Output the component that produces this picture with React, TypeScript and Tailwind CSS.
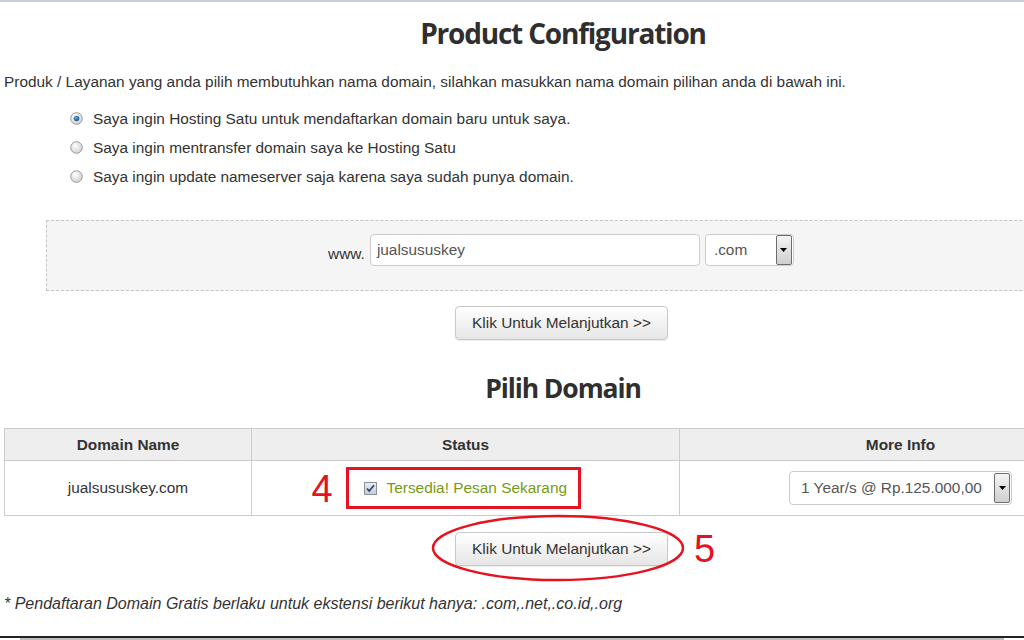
import React from "react";

const font = { fontFamily: '"Liberation Sans", Arial, sans-serif' };

function Radio({ checked }: { checked?: boolean }) {
  return (
    <svg width="13" height="13" viewBox="0 0 13 13" className="shrink-0">
      <defs>
        <radialGradient id={checked ? "rg1" : "rg0"} cx="0.4" cy="0.35" r="0.7">
          <stop offset="0" stopColor="#ffffff" />
          <stop offset="1" stopColor="#cfcfcf" />
        </radialGradient>
        <radialGradient id="rgdot" cx="0.4" cy="0.35" r="0.7">
          <stop offset="0" stopColor="#6aa6d8" />
          <stop offset="1" stopColor="#1a4f86" />
        </radialGradient>
      </defs>
      <circle cx="6.5" cy="6.5" r="5.8" fill={`url(#${checked ? "rg1" : "rg0"})`} stroke="#9a9a9a" strokeWidth="1" />
      {checked && <circle cx="6.5" cy="6.5" r="2.8" fill="url(#rgdot)" />}
    </svg>
  );
}

function DropBtn({ h }: { h: number }) {
  return (
    <div
      className="w-[16px] flex items-center justify-center border border-[#6d6d6d] rounded-[2px] bg-gradient-to-b from-[#f4f4f4] to-[#cfcfcf]"
      style={{ height: h }}
    >
      <svg width="7" height="4" viewBox="0 0 7 4">
        <path d="M0 0h7L3.5 4z" fill="#000" />
      </svg>
    </div>
  );
}

function Btn() {
  return (
    <button
      className="h-[34px] w-[213px] rounded-[4px] border border-[#c8c8c8] bg-gradient-to-b from-[#ffffff] to-[#e6e6e6] text-[15.4px] text-[#333] shadow-[0_1px_1px_rgba(0,0,0,0.08)]"
      style={font}
    >
      Klik Untuk Melanjutkan &gt;&gt;
    </button>
  );
}

export default function App() {
  return (
    <div className="w-[1024px] h-[640px] overflow-hidden bg-white relative" style={font}>
      <div className="h-[2px] bg-[#c9cfdc]" />
      <div className="w-[1118px] ml-[4px] text-[#333] text-[15.4px]">
        <div className="h-[62px] flex items-center justify-center">
          <h1
            className="text-[28px] font-bold text-[#2f2f2f] tracking-[-1.2px]"
            style={{ fontFamily: '"Open Sans", "Noto Sans", sans-serif' }}
          >
            Product Configuration
          </h1>
        </div>
        <p className="mt-[8px] h-[20px] leading-[20px]">
          Produk / Layanan yang anda pilih membutuhkan nama domain, silahkan masukkan nama domain pilihan anda di bawah ini.
        </p>
        <div className="mt-[12px] ml-[66px] flex flex-col">
          {[
            ["Saya ingin Hosting Satu untuk mendaftarkan domain baru untuk saya.", true],
            ["Saya ingin mentransfer domain saya ke Hosting Satu", false],
            ["Saya ingin update nameserver saja karena saya sudah punya domain.", false],
          ].map(([t, c], i) => (
            <div key={i} className="h-[29px] flex items-center gap-[10px]">
              <Radio checked={c as boolean} />
              <span>{t as string}</span>
            </div>
          ))}
        </div>
        <div className="mt-[29px] ml-[42px] h-[71px] border border-dashed border-[#c4c4c4] bg-[#f5f5f5] flex items-start justify-center pt-[13px] pr-[46px]">
          <div className="flex items-center">
            <span className="text-[#333] mt-[7px]">www.</span>
            <div className="ml-[5px] w-[330px] h-[32px] bg-white border border-[#ccc] rounded-[4px] flex items-center px-[6px] text-[#555]">
              jualsususkey
            </div>
            <div className="ml-[5px] w-[89px] h-[32px] bg-white border border-[#ccc] rounded-[4px] flex items-center justify-between pl-[8px] pr-[1px] text-[#555]">
              <span>.com</span>
              <DropBtn h={30} />
            </div>
          </div>
        </div>
        <div className="mt-[15px] flex justify-center ml-[-3px]">
          <Btn />
        </div>
        <div className="mt-[30px] h-[38px] flex items-center justify-center">
          <h2
            className="text-[26.5px] font-bold text-[#2f2f2f] tracking-[-1.1px]"
            style={{ fontFamily: '"Open Sans", "Noto Sans", sans-serif' }}
          >
            Pilih Domain
          </h2>
        </div>
        <div className="mt-[20px] border border-[#ccc]">
          <div className="grid grid-cols-[247px_428px_1fr] h-[32px] bg-[#eeeeee] border-b border-[#ccc] font-bold text-[#333]">
            <div className="flex items-center justify-center border-r border-[#ccc]">Domain Name</div>
            <div className="flex items-center justify-center border-r border-[#ccc]">Status</div>
            <div className="flex items-center justify-center">More Info</div>
          </div>
          <div className="grid grid-cols-[247px_428px_1fr] h-[54px] text-[#333]">
            <div className="flex items-center justify-center border-r border-[#ccc]">jualsususkey.com</div>
            <div className="flex items-center justify-center border-r border-[#ccc]">
              <div className="relative ml-[-5px] w-[235px] h-[42px] border-[3px] border-[#e5121f] flex items-center pl-[15px]">
                <span className="absolute left-[-37px] top-[-2px] text-[38px] leading-[42px] text-[#e5121f]">4</span>
                <span className="w-[13px] h-[13px] border border-[#8a8f9c] bg-gradient-to-b from-[#e8ecf3] to-[#c6cdda] flex items-center justify-center">
                  <svg width="9" height="9" viewBox="0 0 9 9">
                    <path d="M1 4.5l2.2 2.5L8 1.3" fill="none" stroke="#2a3a66" strokeWidth="1.6" />
                  </svg>
                </span>
                <span className="ml-[10px] text-[#789a14]">Tersedia! Pesan Sekarang</span>
              </div>
            </div>
            <div className="flex items-center justify-center">
              <div className="w-[223px] h-[34px] bg-white border border-[#ccc] rounded-[4px] flex items-center justify-between pl-[11px] pr-[1px] text-[#555]">
                <span>1 Year/s @ Rp.125.000,00</span>
                <DropBtn h={30} />
              </div>
            </div>
          </div>
        </div>
        <div className="mt-[16px] flex justify-center ml-[-3px]">
          <div className="relative">
            <Btn />
            <svg className="absolute left-[-24px] top-[-18px] pointer-events-none" width="254" height="68" viewBox="0 0 254 68">
              <ellipse cx="127" cy="34" rx="125" ry="32" fill="none" stroke="#e5121f" strokeWidth="2.5" />
            </svg>
            <span className="absolute left-[239px] top-[-4px] text-[38px] leading-[42px] text-[#e5121f]">5</span>
          </div>
        </div>
        <p className="mt-[28px] h-[20px] leading-[20px] italic text-[16px] text-[#333]">
          * Pendaftaran Domain Gratis berlaku untuk ekstensi berikut hanya: .com,.net,.co.id,.org
        </p>
      </div>
      <div className="absolute left-0 right-0 top-[636px] h-[2px] bg-[#222]" />
      <div className="absolute left-[20px] right-[20px] top-[638px] h-[2px] bg-[#bdbdbd]" />
    </div>
  );
}
